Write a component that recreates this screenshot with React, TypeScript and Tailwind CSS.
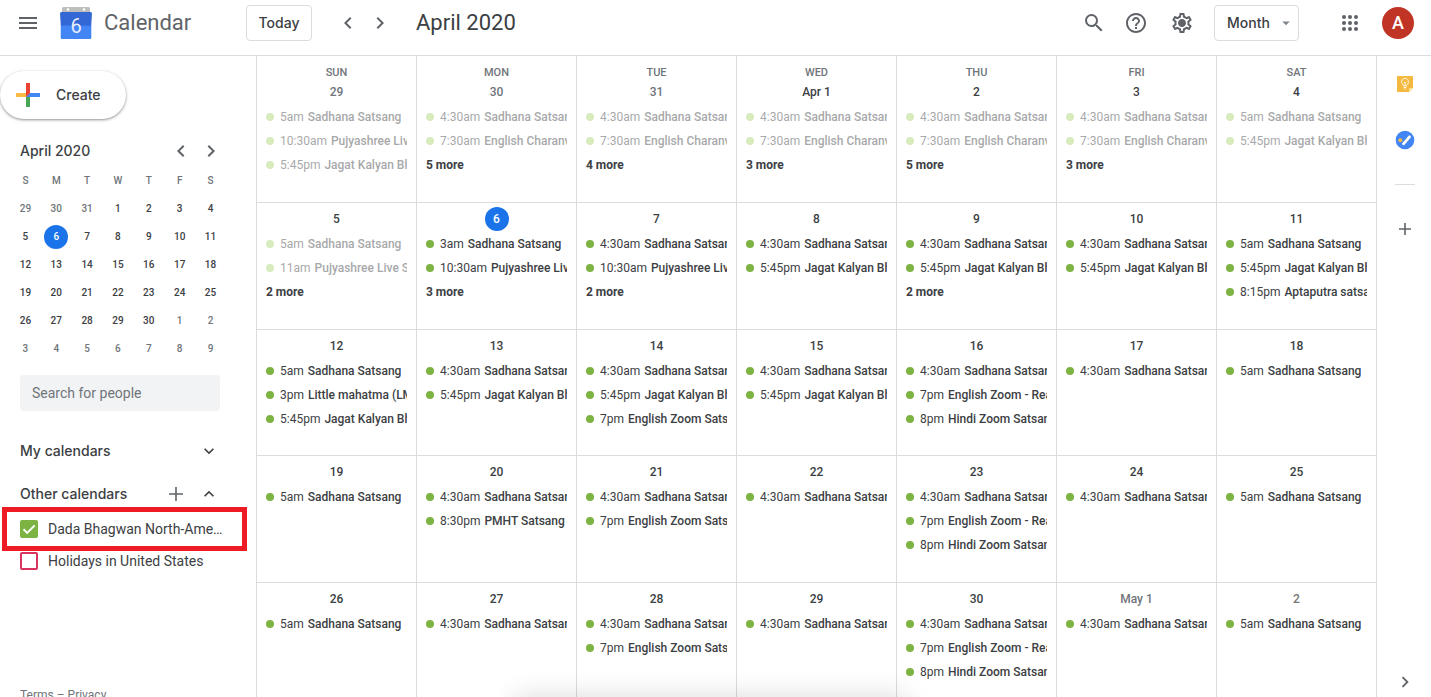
import { clsx } from "clsx";
import { useState } from "react";
import { MdArrowDropDown, MdChevronLeft, MdChevronRight, MdExpandLess, MdExpandMore, MdHelpOutline, MdMenu, MdOutlineSettings, MdSearch } from "react-icons/md";

type CalendarEvent = { time: string; title: string; past?: boolean };
type Day = { label: string; muted?: boolean; today?: boolean; events: CalendarEvent[]; more?: number };

const sadhana = "Sadhana Satsang";
const jagat = "Jagat Kalyan Bhavna";
const live = "Pujyashree Live Satsang";
const charan = "English Charanvidhi";
const english = "English Zoom Satsang";
const reading = "English Zoom - Reading";
const hindi = "Hindi Zoom Satsang";

const ev = (time: string, title: string, past = false): CalendarEvent => ({ time, title, past });

const weeks: Day[][] = [
  [
    { label: "29", muted: true, events: [ev("5am", sadhana, true), ev("10:30am", live, true), ev("5:45pm", jagat, true)] },
    { label: "30", muted: true, events: [ev("4:30am", sadhana, true), ev("7:30am", charan, true)], more: 5 },
    { label: "31", muted: true, events: [ev("4:30am", sadhana, true), ev("7:30am", charan, true)], more: 4 },
    { label: "Apr 1", events: [ev("4:30am", sadhana, true), ev("7:30am", charan, true)], more: 3 },
    { label: "2", events: [ev("4:30am", sadhana, true), ev("7:30am", charan, true)], more: 5 },
    { label: "3", events: [ev("4:30am", sadhana, true), ev("7:30am", charan, true)], more: 3 },
    { label: "4", events: [ev("5am", sadhana, true), ev("5:45pm", jagat, true)] },
  ],
  [
    { label: "5", events: [ev("5am", sadhana, true), ev("11am", live, true)], more: 2 },
    { label: "6", today: true, events: [ev("3am", sadhana), ev("10:30am", live)], more: 3 },
    { label: "7", events: [ev("4:30am", sadhana), ev("10:30am", live)], more: 2 },
    { label: "8", events: [ev("4:30am", sadhana), ev("5:45pm", jagat)] },
    { label: "9", events: [ev("4:30am", sadhana), ev("5:45pm", jagat)], more: 2 },
    { label: "10", events: [ev("4:30am", sadhana), ev("5:45pm", jagat)] },
    { label: "11", events: [ev("5am", sadhana), ev("5:45pm", jagat), ev("8:15pm", "Aptaputra satsang")] },
  ],
  [
    { label: "12", events: [ev("5am", sadhana), ev("3pm", "Little mahatma (LMHT)"), ev("5:45pm", jagat)] },
    { label: "13", events: [ev("4:30am", sadhana), ev("5:45pm", jagat)] },
    { label: "14", events: [ev("4:30am", sadhana), ev("5:45pm", jagat), ev("7pm", english)] },
    { label: "15", events: [ev("4:30am", sadhana), ev("5:45pm", jagat)] },
    { label: "16", events: [ev("4:30am", sadhana), ev("7pm", reading), ev("8pm", hindi)] },
    { label: "17", events: [ev("4:30am", sadhana)] },
    { label: "18", events: [ev("5am", sadhana)] },
  ],
  [
    { label: "19", events: [ev("5am", sadhana)] },
    { label: "20", events: [ev("4:30am", sadhana), ev("8:30pm", "PMHT Satsang")] },
    { label: "21", events: [ev("4:30am", sadhana), ev("7pm", english)] },
    { label: "22", events: [ev("4:30am", sadhana)] },
    { label: "23", events: [ev("4:30am", sadhana), ev("7pm", reading), ev("8pm", hindi)] },
    { label: "24", events: [ev("4:30am", sadhana)] },
    { label: "25", events: [ev("5am", sadhana)] },
  ],
  [
    { label: "26", events: [ev("5am", sadhana)] },
    { label: "27", events: [ev("4:30am", sadhana)] },
    { label: "28", events: [ev("4:30am", sadhana), ev("7pm", english)] },
    { label: "29", events: [ev("4:30am", sadhana)] },
    { label: "30", events: [ev("4:30am", sadhana), ev("7pm", reading), ev("8pm", hindi)] },
    { label: "May 1", muted: true, events: [ev("4:30am", sadhana)] },
    { label: "2", muted: true, events: [ev("5am", sadhana)] },
  ],
];

const rowHeights = ["h-[127px]", "h-[127px]", "h-[126px]", "h-[127px]", "h-[127px]"];
const weekdays = ["Sun", "Mon", "Tue", "Wed", "Thu", "Fri", "Sat"];

// The small calendar always shows six weeks, starting on March 29.
const miniWeeks = Array.from({ length: 6 }, (_, week) =>
  Array.from({ length: 7 }, (_, day) => {
    const n = week * 7 + day - 2;
    if (n < 1) return { n: n + 31, inMonth: false };
    if (n > 30) return { n: n - 30, inMonth: false };
    return { n, inMonth: true };
  })
);

function Logo() {
  return (
    <svg viewBox="0 0 32 32" className="ml-5 h-8 w-8 shrink-0" aria-hidden="true">
      <path d="M3.500 0h25Q30 0 30 1.500V6H2V1.500Q2 0 3.500 0Z" fill="#bdbdbd" />
      <circle cx="8" cy="2.500" r="1.300" fill="#fff" />
      <circle cx="24" cy="2.500" r="1.300" fill="#fff" />
      <path d="M0.800 18h30.500v12.500q0 1.500-1.500 1.500H2.200Q0.700 32 0.700 30.500Z" fill="#4285f4" />
      <path d="M1.500 5h29Q32 5 32 6.500L31.200 18.500H0.800L0 6.500Q0 5 1.500 5Z" fill="#3367d6" />
      <text x="16" y="25.500" textAnchor="middle" fontFamily="Roboto, sans-serif" fontSize="20" fill="#e8eefb">6</text>
    </svg>
  );
}

function CreateIcon() {
  return (
    <svg viewBox="0 0 24 24" className="h-6 w-6" aria-hidden="true">
      <path d="M10 0h4v10l-4 4Z" fill="#ea4335" />
      <path d="M14 10h10v4H10Z" fill="#4285f4" />
      <path d="M0 10h10v4H0Z" fill="#f9bb43" />
      <path d="M10 14h4v10h-4Z" fill="#47a556" />
      <path d="M10 10h4l-4 4Z" fill="#ea4335" />
    </svg>
  );
}

function AppsIcon() {
  const spots = [6, 12, 18];
  return (
    <svg viewBox="0 0 24 24" className="h-6 w-6" fill="#5f6368" aria-hidden="true">
      {spots.map((y) => spots.map((x) => <circle key={`${x}-${y}`} cx={x} cy={y} r="2" />))}
    </svg>
  );
}

function SettingsIcon() {
  return (
    <svg viewBox="0 0 24 24" className="h-6 w-6" aria-hidden="true">
      <MdOutlineSettings size={24} />
      <circle cx="12" cy="12" r="3.200" fill="currentColor" />
    </svg>
  );
}

function PlusIcon({ reach }: { reach: number }) {
  return (
    <svg viewBox="0 0 24 24" className="h-6 w-6" aria-hidden="true">
      <path d={`M12 ${12 - reach}v${reach * 2}M${12 - reach} 12h${reach * 2}`} stroke="currentColor" strokeWidth="1.600" />
    </svg>
  );
}

function KeepIcon() {
  return (
    <svg viewBox="0 0 16 16" className="h-4 w-4" aria-hidden="true">
      <path d="M1 0h14q1 0 1 1v11l-4 4H1q-1 0-1-1V1q0-1 1-1Z" fill="#f5b93f" />
      <path d="M12 16v-4h4Z" fill="#fde293" />
      <path d="M6.500 10V9a3.500 3.500 0 1 1 3 0v1ZM6.500 11.500h3M7.200 12.900h1.600M6.800 6l1.200 1 1.200-1M8 7v2.500" fill="none" stroke="#fff" strokeWidth="0.800" />
    </svg>
  );
}

function TasksIcon() {
  return (
    <svg viewBox="0 0 20 20" className="h-5 w-5" aria-hidden="true">
      <circle cx="10" cy="10" r="9.300" fill="#4285f4" />
      <circle cx="5.300" cy="10.200" r="2" fill="#f5b93f" />
      <path d="M8.500 13.800 14.500 6.800" stroke="#fff" strokeWidth="2.800" strokeLinecap="round" />
    </svg>
  );
}

function Header() {
  return (
    <header className="flex h-14 shrink-0 items-center border-b border-[#dadce0] pb-[9px] pl-4 pr-[17px] text-[#5f6368]">
      <button type="button" aria-label="Main menu"><MdMenu size={24} /></button>
      <Logo />
      <span className="ml-3 w-[142px] text-[22px] leading-8">Calendar</span>
      <button type="button" className="h-9 w-[66px] rounded border border-[#dadce0] font-['Inter',sans-serif] text-sm font-medium text-[#3c4043]">Today</button>
      <button type="button" aria-label="Previous month" className="ml-6"><MdChevronLeft size={24} /></button>
      <button type="button" aria-label="Next month" className="ml-2"><MdChevronRight size={24} /></button>
      <h1 className="ml-6 text-[22px] leading-8 text-[#3c4043]">April 2020</h1>

      <div className="ml-auto flex items-center">
        <button type="button" aria-label="Search"><MdSearch size={24} /></button>
        <button type="button" aria-label="Support" className="ml-[18px]"><MdHelpOutline size={24} /></button>
        <button type="button" aria-label="Settings" className="ml-[22px]"><SettingsIcon /></button>
        <div className="relative ml-5">
          <select aria-label="View" className="h-9 w-[85px] appearance-none rounded border border-[#dadce0] bg-white pl-3 font-['Inter',sans-serif] text-sm font-medium text-[#3c4043]">
            <option>Month</option>
            <option>Week</option>
            <option>Day</option>
          </select>
          <MdArrowDropDown size={18} className="pointer-events-none absolute right-1 top-[9px] text-[#80868b]" />
        </div>
        <button type="button" aria-label="Google apps" className="ml-[39px]"><AppsIcon /></button>
        <button type="button" aria-label="Account" className="ml-5 h-8 w-8 rounded-full bg-[#c03425] text-lg font-medium text-white">A</button>
      </div>
    </header>
  );
}

function MiniCalendar() {
  return (
    <section aria-label="April 2020">
      <div className="mt-5 flex h-6 items-center pl-5 pr-[33px] text-[#5f6368]">
        <h2 className="flex-1 font-['Inter',sans-serif] text-sm font-medium text-[#3c4043]">April 2020</h2>
        <button type="button" aria-label="Previous month"><MdChevronLeft size={24} /></button>
        <button type="button" aria-label="Next month" className="ml-1.5"><MdChevronRight size={24} /></button>
      </div>
      <table className="ml-[10px] mt-1 w-[216px] table-fixed text-[10px] font-medium">
        <thead>
          <tr className="h-7 text-[#70757a]">
            {weekdays.map((day) => (
              <th key={day} scope="col" abbr={day} className="p-0 font-medium">{day[0]}</th>
            ))}
          </tr>
        </thead>
        <tbody>
          {miniWeeks.map((week, i) => (
            <tr key={i} className="h-7">
              {week.map(({ n, inMonth }) => (
                <td key={n} className="p-0 text-center">
                  <button
                    type="button"
                    className={clsx(
                      "mx-auto block h-6 w-6 rounded-full",
                      inMonth && n === 6 ? "bg-[#1a73e8] text-white" : inMonth ? "text-[#3c4043]" : "text-[#70757a]"
                    )}
                  >
                    {n}
                  </button>
                </td>
              ))}
            </tr>
          ))}
        </tbody>
      </table>
    </section>
  );
}

function Sidebar() {
  const [dada, setDada] = useState(true);
  const [holidays, setHolidays] = useState(false);

  return (
    <aside className="w-64 shrink-0 overflow-hidden pt-[15px] text-sm text-[#3c4043]">
      <button type="button" className="flex h-12 w-[126px] items-center gap-4 rounded-full pl-4 font-['Inter',sans-serif] font-medium shadow-[0_1px_2px_rgba(60,64,67,0.4),0_1px_3px_1px_rgba(60,64,67,0.15)]">
        <CreateIcon />
        Create
      </button>
      <MiniCalendar />
      <input
        type="text"
        aria-label="Search for people"
        placeholder="Search for people"
        className="ml-5 mt-3 block h-9 w-[200px] rounded bg-[#f1f3f4] px-3 placeholder:text-[#70757a]"
      />
      <div className="mt-6 flex h-8 items-center pl-5 pr-[37px]">
        <h2 className="flex-1 font-['Inter',sans-serif] font-medium">My calendars</h2>
        <button type="button" aria-label="Show my calendars"><MdExpandMore size={20} /></button>
      </div>
      <div className="mt-[11px] flex h-8 items-center pl-5 pr-[37px]">
        <h2 className="flex-1 font-['Inter',sans-serif] font-medium">Other calendars</h2>
        <button type="button" aria-label="Add other calendars" className="text-[#5f6368]"><PlusIcon reach={7} /></button>
        <button type="button" aria-label="Hide other calendars" className="ml-[11px]"><MdExpandLess size={20} /></button>
      </div>
      <div className="relative mt-[3px] h-8">
        <label className="flex h-8 items-center gap-[10px] pl-5 pr-8">
          <input type="checkbox" checked={dada} onChange={() => setDada(!dada)} className="peer h-[18px] w-[18px] shrink-0 appearance-none rounded-xs border-2 border-[#7cb342] checked:bg-[#7cb342]" />
          <svg viewBox="0 0 18 18" className="pointer-events-none absolute left-5 top-[7px] hidden h-[18px] w-[18px] peer-checked:block" aria-hidden="true">
            <path d="m3.500 9.200 3.700 3.700 7.500-7.500" fill="none" stroke="#fff" strokeWidth="2" />
          </svg>
          <span className="truncate">Dada Bhagwan North-America</span>
        </label>
        <div className="pointer-events-none absolute -top-1.5 left-0.5 h-11 w-[245px] border-[5px] border-[#ed1c24]" />
      </div>
      <label className="flex h-8 items-center gap-[10px] pl-5">
        <input type="checkbox" checked={holidays} onChange={() => setHolidays(!holidays)} className="h-[18px] w-[18px] shrink-0 appearance-none rounded-xs border-2 border-[#d8345f] checked:bg-[#d8345f]" />
        Holidays in United States
      </label>
      <p className="mt-[110px] pl-5 text-xs text-[#70757a]">
        <a href="#terms">Terms</a> – <a href="#privacy">Privacy</a>
      </p>
    </aside>
  );
}

function DayCell({ day }: { day: Day }) {
  return (
    <td className="border-b border-l border-[#dadce0] p-0 pl-[9px] pr-[9px] pt-1 align-top">
      <div
        className={clsx(
          "mx-auto mb-px flex h-6 items-center justify-center rounded-full font-medium",
          day.today ? "w-6 bg-[#1a73e8] text-white" : day.muted ? "w-12 text-[#70757a]" : "w-12 text-[#3c4043]"
        )}
      >
        {day.label}
      </div>
      {day.events.map((event) => (
        <button
          key={event.time}
          type="button"
          className={clsx("flex h-6 w-full items-center overflow-hidden whitespace-nowrap text-left text-[#3c4043]", event.past && "opacity-45")}
        >
          <span className={clsx("mr-1.5 h-2 w-2 shrink-0 rounded-full", event.past ? "bg-[#a7d36f]" : "bg-[#7cb342]")} />
          <span className="overflow-hidden">
            <span className="mr-1">{event.time}</span>
            <span className="font-medium">{event.title}</span>
          </span>
        </button>
      ))}
      {day.more && <button type="button" className="block h-6 font-bold text-[#3c4043]">{day.more} more</button>}
    </td>
  );
}

function MonthGrid() {
  return (
    <main className="relative min-w-0 flex-1 overflow-hidden">
      <table className="w-full table-fixed border-separate border-spacing-0 border-r border-[#dadce0] text-xs">
        <thead>
          <tr className="h-5">
            {weekdays.map((day) => (
              <th key={day} scope="col" className="border-l border-[#dadce0] p-0 pt-[13px] text-[11px] font-medium uppercase leading-[7px] text-[#70757a]">{day}</th>
            ))}
          </tr>
        </thead>
        <tbody>
          {weeks.map((week, i) => (
            <tr key={i} className={rowHeights[i]}>
              {week.map((day) => <DayCell key={day.label} day={day} />)}
            </tr>
          ))}
        </tbody>
      </table>
      <div className="pointer-events-none absolute left-[260px] right-[470px] top-full h-10 shadow-[0_0_28px_rgba(0,0,0,0.15)]" />
    </main>
  );
}

function SidePanel() {
  return (
    <aside className="flex w-[54px] shrink-0 flex-col items-center pb-1 pl-0.5 pt-[18px] text-[#5f6368]">
      <button type="button" aria-label="Keep" className="flex h-5 items-center"><KeepIcon /></button>
      <button type="button" aria-label="Tasks" className="mt-9"><TasksIcon /></button>
      <hr className="mt-[34px] w-5 border-[#dadce0]" />
      <button type="button" aria-label="Get add-ons" className="mt-8"><PlusIcon reach={6} /></button>
      <button type="button" aria-label="Hide side panel" className="mt-auto"><MdChevronRight size={22} /></button>
    </aside>
  );
}

export default function App() {
  return (
    <div className="flex h-screen flex-col overflow-hidden bg-white font-['Roboto',sans-serif]">
      <Header />
      <div className="flex min-h-0 flex-1">
        <Sidebar />
        <MonthGrid />
        <SidePanel />
      </div>
    </div>
  );
}
